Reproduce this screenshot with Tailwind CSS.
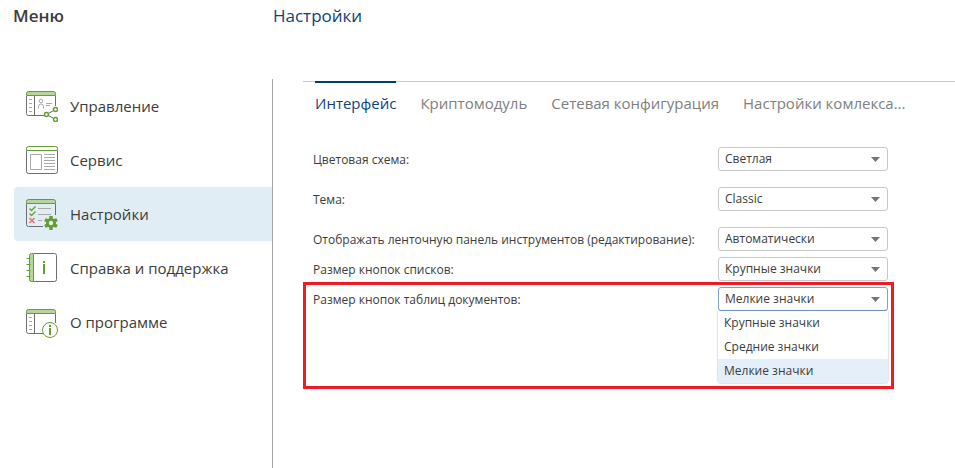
<!DOCTYPE html>
<html lang="ru">
<head>
  <meta charset="UTF-8" />
  <meta name="viewport" content="width=device-width, initial-scale=1" />
  <title>Настройки</title>
  <script src="https://cdn.jsdelivr.net/npm/@tailwindcss/browser@4"></script>
</head>
<body class="bg-white text-[#3c3c3c] font-['Open_Sans','Noto_Sans',sans-serif] min-h-screen flex flex-col">
  <header class="flex h-[79px] shrink-0 pt-1">
    <h2 class="w-[273px] shrink-0 pl-[13px] text-[17px] leading-6 font-semibold">Меню</h2>
    <h1 class="text-[17px] leading-6 text-[#0f4279]">Настройки</h1>
  </header>

  <div class="flex grow">
    <nav class="w-[273px] shrink-0 pl-3.5 border-r border-[#a6a6a6] text-[15px]">
      <a href="#" class="flex items-center h-[54px] pl-3 gap-3">
        <svg class="w-8 h-8 shrink-0" viewBox="0 0 32 32" fill="none">
          <path d="M.5 6v17.500q0 2 2 2H18M29.500 6v10M8.500 6v19" stroke="#6d6e70" />
          <path d="M3 9.500h3M3 13.500h3M3 17.500h3M3 21.500h3" stroke="#a7a9ac" />
          <path d="M.5 5.500v-2q0-2 2-2h25q2 0 2 2v2z" fill="#b5d59a" stroke="#669c35" />
          <circle cx="15" cy="11" r="1.800" stroke="#a7a9ac" />
          <path d="M12.500 18.500v-2q0-2.500 2.500-2.500t2.500 2.500v2M20 13.500h6M20 15.500h4" stroke="#a7a9ac" />
          <path d="M29.500 19.500l-9 5 9 5" stroke="#6d6e70" />
          <g fill="#fff" stroke="#669c35" stroke-width="1.500">
            <circle cx="29.500" cy="19.500" r="2" /><circle cx="20.500" cy="24.500" r="2" /><circle cx="29.500" cy="29.500" r="2" />
          </g>
        </svg>
        Управление
      </a>
      <a href="#" class="flex items-center h-[54px] pl-3 gap-3">
        <svg class="w-8 h-8 shrink-0" viewBox="0 0 32 32" fill="none">
          <path d="M.5 7v20.500q0 2 2 2h27q2 0 2-2V7" stroke="#6d6e70" />
          <path d="M.5 6.500v-2q0-2 2-2h27q2 0 2 2v2z" fill="#fff" stroke="#669c35" />
          <path d="M4.500 10.500h11v15h-11z" stroke="#a7a9ac" />
          <path d="M18 10.500h11M18 13.500h11M18 16.500h11M18 19.500h11M18 22.500h11M18 25.500h11" stroke="#a7a9ac" />
        </svg>
        Сервис
      </a>
      <a href="#" aria-current="page" class="flex items-center h-[54px] pl-3 gap-3 rounded-l bg-[#e1edf5]">
        <svg class="w-8 h-8 shrink-0" viewBox="0 0 32 32" fill="none">
          <path d="M.5 6v20.500q0 2 2 2H17M29.500 6v11" stroke="#6d6e70" />
          <path d="M.5 5.500v-2q0-2 2-2h25q2 0 2 2v2z" fill="#b5d59a" stroke="#669c35" />
          <path d="M3.500 10.500l2 2 4-4M3.500 15.500l2 2 4-4" stroke="#669c35" stroke-width="1.300" />
          <path d="M3.500 20l5 5M8.500 20l-5 5" stroke="#f0717c" stroke-width="1.700" />
          <path d="M12 10.500h13M12 16.500h13M12 22.500h4" stroke="#a7a9ac" />
          <path d="M25 18v14M19 21.500l12 7M31 21.500l-12 7" stroke="#669c35" stroke-width="3.400" />
          <circle cx="25" cy="25" r="5" fill="#669c35" />
          <circle cx="25" cy="25" r="2.200" fill="#e1edf5" />
        </svg>
        Настройки
      </a>
      <a href="#" class="flex items-center h-[54px] pl-3 gap-3">
        <svg class="w-8 h-8 shrink-0" viewBox="0 0 32 32" fill="none">
          <path d="M8 1.500h20.500q2 0 2 2v24q0 2-2 2H8" stroke="#6d6e70" />
          <path d="M7.500 1.500h-2q-2 0-2 2v24q0 2 2 2h2z" fill="#b5d59a" />
          <path d="M7.500 29.500h-2q-2 0-2-2V3.500q0-2 2-2h2zM.5 6.500h4M.5 12.500h4M.5 18.500h4M.5 24.500h4" stroke="#669c35" />
          <path d="M17 9h2v2h-2zM17 12h2v10h-2z" fill="#669c35" />
        </svg>
        Справка и поддержка
      </a>
      <a href="#" class="flex items-center h-[54px] pl-3 gap-3">
        <svg class="w-8 h-8 shrink-0" viewBox="0 0 32 32" fill="none">
          <path d="M.5 8v17.500q0 2 2 2H18M29.500 8v9M8.500 8v19" stroke="#6d6e70" />
          <path d="M3 11.500h3M3 15.500h3M3 19.500h3M3 23.500h3" stroke="#a7a9ac" />
          <path d="M.5 7.500v-2q0-2 2-2h25q2 0 2 2v2z" fill="#b5d59a" stroke="#669c35" />
          <circle cx="24" cy="24" r="7.500" fill="#fff" stroke="#669c35" />
          <path d="M23 19h2v2h-2zM23 22h2v7h-2z" fill="#669c35" />
        </svg>
        О программе
      </a>
    </nav>

    <main class="grow min-w-0 pl-[30px] pt-0.5">
      <div role="tablist" class="flex gap-6 pl-3 border-t border-[#c8c8c8] text-[15px] text-[#808080] whitespace-nowrap">
        <button role="tab" aria-selected="true" class="-mt-px pt-2.5 border-t-2 border-[#003b7a] leading-5 text-[#0f4279]">Интерфейс</button>
        <button role="tab" class="-mt-px pt-3 leading-5">Криптомодуль</button>
        <button role="tab" class="-mt-px pt-3 leading-5">Сетевая конфигурация</button>
        <button role="tab" class="-mt-px pt-3 leading-5">Настройки комлекса...</button>
      </div>

      <form class="pt-[34px] text-xs">
        <div class="flex items-center pl-2.5 mb-4">
          <label for="scheme" class="w-[405px] pt-0.5">Цветовая схема:</label>
          <div class="grid items-center w-[170px]">
            <select id="scheme" class="col-start-1 row-start-1 appearance-none h-6 pl-1.5 border border-[#c8c8c8] rounded-[3px] bg-white">
              <option>Светлая</option>
            </select>
            <svg class="col-start-1 row-start-1 justify-self-end mr-2 w-[9px] h-[5px] pointer-events-none" viewBox="0 0 9 5"><path d="M0 0h9L4.500 5z" fill="#757575" /></svg>
          </div>
        </div>
        <div class="flex items-center pl-2.5 mb-4">
          <label for="theme" class="w-[405px] pt-0.5">Тема:</label>
          <div class="grid items-center w-[170px]">
            <select id="theme" class="col-start-1 row-start-1 appearance-none h-6 pl-1.5 border border-[#c8c8c8] rounded-[3px] bg-white">
              <option>Classic</option>
            </select>
            <svg class="col-start-1 row-start-1 justify-self-end mr-2 w-[9px] h-[5px] pointer-events-none" viewBox="0 0 9 5"><path d="M0 0h9L4.500 5z" fill="#757575" /></svg>
          </div>
        </div>
        <div class="flex items-center pl-2.5 mb-1.5">
          <label for="ribbon" class="w-[405px] pt-0.5">Отображать ленточную панель инструментов (редактирование):</label>
          <div class="grid items-center w-[170px]">
            <select id="ribbon" class="col-start-1 row-start-1 appearance-none h-6 pl-1.5 border border-[#c8c8c8] rounded-[3px] bg-white">
              <option>Автоматически</option>
            </select>
            <svg class="col-start-1 row-start-1 justify-self-end mr-2 w-[9px] h-[5px] pointer-events-none" viewBox="0 0 9 5"><path d="M0 0h9L4.500 5z" fill="#757575" /></svg>
          </div>
        </div>
        <div class="flex items-center pl-2.5 mb-px">
          <label for="list-size" class="w-[405px] pt-0.5">Размер кнопок списков:</label>
          <div class="grid items-center w-[170px]">
            <select id="list-size" class="col-start-1 row-start-1 appearance-none h-6 pl-1.5 border border-[#c8c8c8] rounded-[3px] bg-white">
              <option>Крупные значки</option>
            </select>
            <svg class="col-start-1 row-start-1 justify-self-end mr-2 w-[9px] h-[5px] pointer-events-none" viewBox="0 0 9 5"><path d="M0 0h9L4.500 5z" fill="#757575" /></svg>
          </div>
        </div>

        <!-- highlighted row with the open list -->
        <div class="flex items-center w-fit pl-[7px] pr-[3px] pt-0.5 pb-[75px] border-3 border-[#ed1c24]">
          <label for="table-size" class="w-[405px] pt-0.5">Размер кнопок таблиц документов:</label>
          <div class="relative grid items-center w-[170px]">
            <select id="table-size" class="col-start-1 row-start-1 appearance-none h-6 pl-1.5 border border-[#7da2ce] rounded-[3px] bg-white">
              <option>Мелкие значки</option>
              <option>Крупные значки</option>
              <option>Средние значки</option>
            </select>
            <svg class="col-start-1 row-start-1 justify-self-end mr-2 w-[9px] h-[5px] pointer-events-none" viewBox="0 0 9 5"><path d="M0 0h9L4.500 5z" fill="#757575" /></svg>
            <ul role="listbox" class="absolute top-full inset-x-0 rounded-b-[3px] bg-white leading-6 shadow-[0_0_2px_rgba(0,0,0,0.4)]">
              <li role="option" class="pl-1.5">Крупные значки</li>
              <li role="option" class="pl-1.5">Средние значки</li>
              <li role="option" aria-selected="true" class="pl-1.5 rounded-b-[3px] bg-[#e5eff9]">Мелкие значки</li>
            </ul>
          </div>
        </div>
      </form>
    </main>
  </div>
</body>
</html>
